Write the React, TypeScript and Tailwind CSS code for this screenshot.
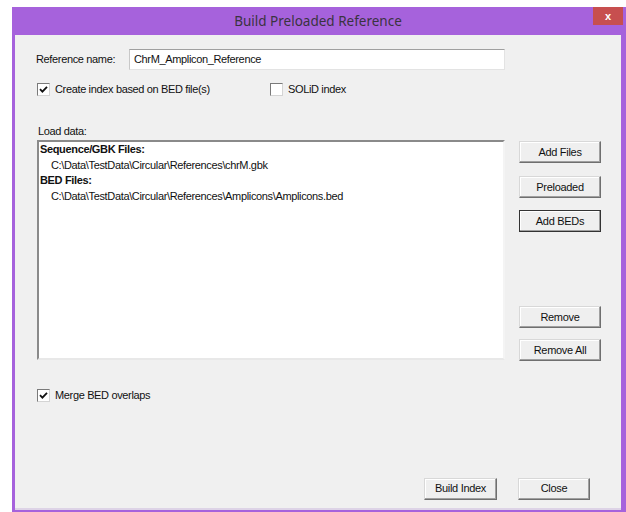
import React from 'react';

const ui = { fontFamily: 'Tahoma, "Liberation Sans", Arial, sans-serif' };

function Check({ checked }: { checked?: boolean }) {
  return (
    <span className="w-[13px] h-[13px] bg-white border border-t-[#7a7a7a] border-l-[#7a7a7a] border-r-[#d4d4d4] border-b-[#d4d4d4] flex items-center justify-center shrink-0">
      {checked && (
        <svg width="9" height="9" viewBox="0 0 9 9">
          <path d="M1 4.2 L3.4 6.6 L8 1.8" fill="none" stroke="#111" strokeWidth="1.8" />
        </svg>
      )}
    </span>
  );
}

function Btn({ label, w = 'w-[82px]', focused }: { label: string; w?: string; focused?: boolean }) {
  return (
    <button
      className={`${w} h-[22px] bg-[#efefef] text-[11px] tracking-[-0.3px] text-[#111] border ${
        focused
          ? 'border-[#333]'
          : 'border-t-[#d8d8d8] border-l-[#d8d8d8] border-r-[#6f6f6f] border-b-[#6f6f6f]'
      } shadow-[inset_-1px_-1px_0_#a0a0a0,inset_1px_1px_0_#ffffff] flex items-center justify-center`}
    >
      {label}
    </button>
  );
}

export default function App() {
  return (
    <div className="min-h-screen bg-white pt-[7px] pl-[12px]" style={ui}>
      <div className="w-[614px] h-[505px] bg-[#a662dc] flex flex-col pl-[3px] pr-[5px] pb-[2px]">
        {/* title bar */}
        <div className="h-[28px] relative flex items-center justify-center">
          <span className="text-[13.5px] text-[#3a3340]" style={{ fontFamily: '"Segoe UI", "Noto Sans", sans-serif' }}>
            Build Preloaded Reference
          </span>
          <div className="absolute right-[-2px] top-0 w-[30px] h-[18px] bg-[#c74f4f] flex items-center justify-center text-white text-[11px] font-bold">
            x
          </div>
        </div>

        {/* client area */}
        <div className="flex-1 bg-[#f0f0f0] border-b-2 border-[#ddd3e6] flex flex-col text-[11px] tracking-[-0.35px] text-[#111]">
          <div className="flex items-center mt-[14px] h-[21px]">
            <span className="ml-[21px] w-[93px]">Reference name:</span>
            <div className="w-[376px] h-[21px] bg-white border border-[#e3e3e3] border-t-[#a0a0a0] border-l-[#c8c8c8] flex items-center pl-[4px]">
              ChrM_Amplicon_Reference
            </div>
          </div>

          <div className="flex items-center mt-[14px] h-[11px]">
            <div className="ml-[22px] w-[233px] flex items-center gap-[5px]">
              <Check checked />
              <span>Create index based on BED file(s)</span>
            </div>
            <div className="flex items-center gap-[5px]">
              <Check />
              <span>SOLiD index</span>
            </div>
          </div>

          <div className="ml-[23px] mt-[28px] h-[16px]">Load data:</div>

          <div className="flex mt-[1px]">
            <div className="ml-[22px] w-[468px] h-[220px] bg-white border-2 border-t-[#8a8a8a] border-l-[#8a8a8a] border-r-[#f4f4f4] border-b-[#e8e8e8] pl-[1px] leading-[15.5px]">
              <div className="font-bold">Sequence/GBK Files:</div>
              <div className="pl-[11px]">C:\Data\TestData\Circular\References\chrM.gbk</div>
              <div className="font-bold">BED Files:</div>
              <div className="pl-[11px]">C:\Data\TestData\Circular\References\Amplicons\Amplicons.bed</div>
            </div>
            <div className="ml-[14px] flex flex-col">
              <div className="mt-[1px]"><Btn label="Add Files" /></div>
              <div className="mt-[13px]"><Btn label="Preloaded" /></div>
              <div className="mt-[12px]"><Btn label="Add BEDs" focused /></div>
              <div className="mt-[74px]"><Btn label="Remove" /></div>
              <div className="mt-[11px]"><Btn label="Remove All" /></div>
            </div>
          </div>

          <div className="flex items-center gap-[5px] ml-[22px] mt-[26px]">
            <Check checked />
            <span>Merge BED overlaps</span>
          </div>

          <div className="flex mt-[74px] ml-[409px] gap-[21px]">
            <Btn label="Build Index" w="w-[73px]" />
            <Btn label="Close" w="w-[72px]" />
          </div>
        </div>
      </div>
    </div>
  );
}
